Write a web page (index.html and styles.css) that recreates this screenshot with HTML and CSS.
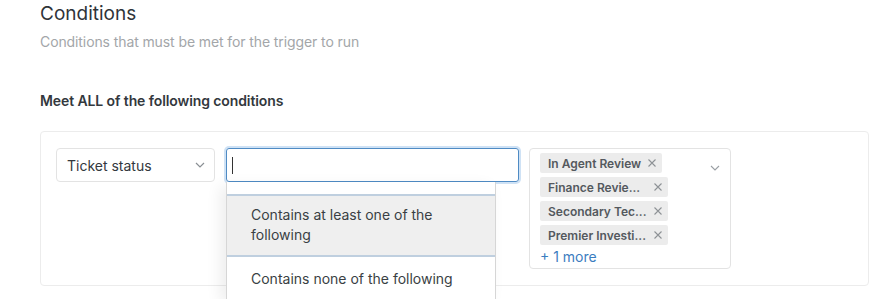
FILE: index.html
```html
<!DOCTYPE html>
<html>
<head>
<meta charset="utf-8">
<link rel="stylesheet" href="styles.css">
</head>
<body>
<div class="page">
  <h1 class="title">Conditions</h1>
  <p class="subtitle">Conditions that must be met for the trigger to run</p>
  <h2 class="heading">Meet ALL of the following conditions</h2>
  <div class="card">
    <div class="row">
      <div class="select">
        <span class="select-text">Ticket status</span>
        <svg class="chev" width="10" height="6" viewBox="0 0 10 6"><path d="M1 1l4 4 4-4" fill="none" stroke="#8a8f94" stroke-width="1.2"/></svg>
      </div>
      <div class="combo">
        <div class="input"><span class="caret"></span></div>
        <div class="menu">
          <div class="menu-top"></div>
          <div class="option active">Contains at least one of the following</div>
          <div class="option second">Contains none of the following</div>
        </div>
      </div>
      <div class="tags">
        <div class="tag-list">
          <span class="tag"><span class="tag-text">In Agent Review</span><svg class="x" width="8" height="8" viewBox="0 0 8 8"><path d="M0.5 0.5l7 7M7.5 0.5l-7 7" stroke="#8e9296" stroke-width="1.1"/></svg></span>
          <span class="tag fixed"><span class="tag-text">Finance Revie...</span><svg class="x" width="8" height="8" viewBox="0 0 8 8"><path d="M0.5 0.5l7 7M7.5 0.5l-7 7" stroke="#8e9296" stroke-width="1.1"/></svg></span>
          <span class="tag fixed"><span class="tag-text">Secondary Tec...</span><svg class="x" width="8" height="8" viewBox="0 0 8 8"><path d="M0.5 0.5l7 7M7.5 0.5l-7 7" stroke="#8e9296" stroke-width="1.1"/></svg></span>
          <span class="tag fixed"><span class="tag-text">Premier Investi...</span><svg class="x" width="8" height="8" viewBox="0 0 8 8"><path d="M0.5 0.5l7 7M7.5 0.5l-7 7" stroke="#8e9296" stroke-width="1.1"/></svg></span>
          <span class="more">+ 1 more</span>
        </div>
        <svg class="chev chev-tags" width="10" height="6" viewBox="0 0 10 6"><path d="M1 1l4 4 4-4" fill="none" stroke="#9a9fa4" stroke-width="1.1"/></svg>
      </div>
    </div>
  </div>
</div>
</body>
</html>
```
FILE: styles.css
```css
* { box-sizing: border-box; }
html, body { margin: 0; padding: 0; background: #fff; }
body {
  font-family: Inter, "Noto Sans", "Liberation Sans", sans-serif;
  color: #33383d;
  overflow: hidden;
  height: 299px;
}
.page {
  padding: 2px 21px 0 40px;
}
.title {
  margin: 0;
  font-size: 19px;
  line-height: 24px;
  font-weight: 400;
  color: #2f3439;
}
.subtitle {
  margin: 6px 0 0;
  font-size: 14px;
  line-height: 20px;
  letter-spacing: -0.1px;
  color: #a3a6a9;
}
.heading {
  margin: 39px 0 0;
  font-size: 14px;
  line-height: 20px;
  font-weight: 600;
  letter-spacing: -0.1px;
  color: #33383d;
}
.card {
  margin-top: 20px;
  border: 1px solid #ececec;
  border-radius: 4px;
  padding: 16px 15px 15px;
  height: 155px;
}
.row {
  display: flex;
  align-items: flex-start;
}
.select {
  width: 159px;
  height: 34px;
  border: 1px solid #e3e3e3;
  border-radius: 4px;
  display: flex;
  align-items: center;
  justify-content: space-between;
  padding: 0 9px 0 10px;
  font-size: 14px;
}
.chev { display: block; }
.combo {
  position: relative;
  margin-left: 11px;
  width: 293px;
}
.input {
  height: 34px;
  border: 1px solid #4f8bc4;
  border-radius: 3px;
  box-shadow: 0 0 0 2px #cfe2f5;
  display: flex;
  align-items: center;
  padding-left: 5px;
}
.caret {
  display: block;
  width: 1px;
  height: 17px;
  background: #333;
}
.menu {
  position: absolute;
  left: 0;
  top: 34px;
  width: 270px;
  height: 117px;
  overflow: hidden;
  background: #fff;
  border-left: 1px solid #d6d6d6;
  border-right: 1px solid #d6d6d6;
  box-shadow: -6px 4px 14px rgba(0,0,0,0.07);
  z-index: 2;
}
.menu-top {
  height: 12px;
}
.option {
  border-top: 2px solid #bfcfdf;
  padding: 9px 24px 10px;
  font-size: 14px;
  line-height: 20px;
  color: #3a3f44;
}
.option.second {
  padding-top: 12px;
}
.option.active {
  background: #efefef;
}
.tags {
  margin-left: 10px;
  width: 202px;
  height: 121px;
  border: 1px solid #e3e3e3;
  border-radius: 4px;
  display: flex;
  justify-content: space-between;
  padding: 4px 10px 0 10px;
}
.tag-list {
  display: flex;
  flex-direction: column;
  align-items: flex-start;
  gap: 4px;
}
.tag {
  height: 20px;
  background: #ececec;
  border-radius: 2px;
  display: flex;
  align-items: center;
  justify-content: space-between;
  padding: 0 6px 0 8px;
  font-size: 12px;
  font-weight: 600;
  color: #54595e;
}
.tag.fixed { width: 128px; }
.tag-text { white-space: nowrap; }
.x {
  display: block;
  margin-left: 7px;
  flex: none;
}
.more {
  font-size: 14px;
  line-height: 18px;
  color: #3b7dbf;
  margin-top: -1px;
}
.chev-tags { margin-top: 12px; }
```
